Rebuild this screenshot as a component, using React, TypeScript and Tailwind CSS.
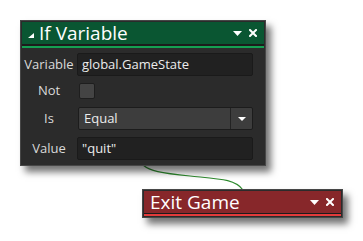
import React from "react";

const font = { fontFamily: '"Open Sans", "Noto Sans", sans-serif' };

function HeaderIcons() {
  return (
    <div className="flex items-center gap-[7px] pr-[7px]">
      <svg width="9" height="5" viewBox="0 0 9 5">
        <path d="M0 0 H9 L4.5 5 Z" fill="#ffffff" />
      </svg>
      <svg width="8" height="8" viewBox="0 0 8 8">
        <path d="M1 1 L7 7 M7 1 L1 7" stroke="#ffffff" strokeWidth="2" strokeLinecap="square" />
      </svg>
    </div>
  );
}

export default function App() {
  return (
    <div className="relative w-[363px] h-[241px] bg-white overflow-hidden" style={font}>
      <svg className="absolute left-0 top-0" width="363" height="241" viewBox="0 0 363 241">
        <path
          d="M143 165 C150 171, 160 173, 190 176 S 235 179, 243 190"
          fill="none"
          stroke="#2e8a2e"
          strokeWidth="1.2"
        />
      </svg>

      <div className="relative ml-[20px] mt-[20px] w-[246px] border border-[#474747] bg-[#2b2b2b] p-px shadow-[5px_6px_7px_rgba(0,0,0,0.55)]">
        <div className="flex h-[22px] items-center justify-between bg-[#0a5632]">
          <div className="flex items-center">
            <svg className="ml-[6px] mt-[4px]" width="6" height="5" viewBox="0 0 6 5">
              <path d="M6 0 V5 H0 Z" fill="#ffffff" />
            </svg>
            <span className="ml-[5px] text-[19px] leading-[22px] text-white">If Variable</span>
          </div>
          <HeaderIcons />
        </div>
        <div className="h-[2px] bg-[#1c1c1c]" />
        <div className="h-[2px] bg-[#14a052]" />
        <div className="grid grid-cols-[54px_176px] gap-x-px pt-[5px] pb-[4px] text-[13px] text-[#dadada]">
          <div className="flex h-[23px] items-center justify-center">Variable</div>
          <div className="flex h-[23px] items-center rounded-[2px] border border-[#1a1a1a] bg-[#212121] pl-[4px] text-[#ececec]">
            global.GameState
          </div>

          <div className="mt-[7px] flex h-[16px] items-center justify-center">Not</div>
          <div className="mt-[7px] flex h-[16px] items-center">
            <div className="ml-[2px] h-[16px] w-[16px] rounded-[2px] border border-[#1e1e1e] bg-[#444444]" />
          </div>

          <div className="mt-[8px] flex h-[23px] items-center justify-center">Is</div>
          <div className="mt-[8px] ml-[1px] flex h-[23px] rounded-[2px] border border-[#1c1c1c] bg-[#3d3d3d] text-[#ececec]">
            <div className="flex flex-1 items-center pl-[5px]">Equal</div>
            <div className="flex w-[22px] items-center justify-center border-l border-[#232323]">
              <svg width="8" height="4" viewBox="0 0 8 4">
                <path d="M0 0 H8 L4 4 Z" fill="#ffffff" />
              </svg>
            </div>
          </div>

          <div className="mt-[7px] flex h-[23px] items-center justify-center">Value</div>
          <div className="mt-[7px] flex h-[23px] items-center rounded-[2px] border border-[#1a1a1a] bg-[#212121] pl-[4px] text-[#ececec]">
            "quit"
          </div>
        </div>
      </div>

      <div className="relative ml-[142px] mt-[23px] w-[201px] border border-[#474747] bg-[#2b2b2b] p-px shadow-[5px_6px_7px_rgba(0,0,0,0.55)]">
        <div className="flex h-[22px] items-center justify-between bg-[#87272a]">
          <span className="ml-[6px] text-[19px] leading-[22px] text-white">Exit Game</span>
          <HeaderIcons />
        </div>
        <div className="h-[1px] bg-[#1c1c1c]" />
        <div className="h-[2px] bg-[#e23b3b]" />
      </div>
    </div>
  );
}
